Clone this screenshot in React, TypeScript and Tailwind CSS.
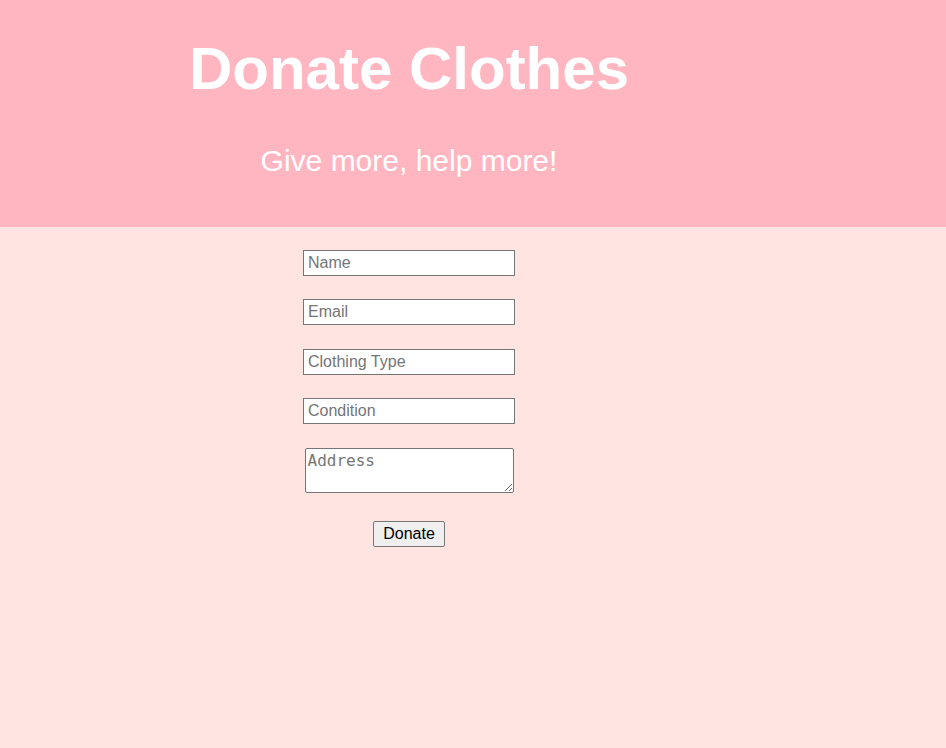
import React from 'react';

const fieldClass =
  'block w-[212px] h-[26px] border border-[#767676] bg-white px-[4px] text-[16px] text-black placeholder:text-[#757575] outline-none';

const App: React.FC = () => {
  return (
    <div className="min-h-screen bg-[#ffe4e1] font-['Liberation_Sans',Arial,sans-serif]">
      {/* Header */}
      <header className="bg-[#ffb6c1] h-[227px]">
        <div className="w-[818px] pt-[34px] text-center text-white">
          <h1 className="text-[60px] leading-[69px] font-bold">Donate Clothes</h1>
          <p className="mt-[40px] text-[30px] leading-[35px]">Give more, help more!</p>
        </div>
      </header>

      {/* Form */}
      <form className="w-[818px] pt-[23px] flex flex-col items-center" onSubmit={(e) => e.preventDefault()}>
        <input type="text" placeholder="Name" className={fieldClass} />
        <input type="email" placeholder="Email" className={`${fieldClass} mt-[23px]`} />
        <input type="text" placeholder="Clothing Type" className={`${fieldClass} mt-[23.5px]`} />
        <input type="text" placeholder="Condition" className={`${fieldClass} mt-[23.5px]`} />
        <textarea
          placeholder="Address"
          className="block w-[209px] h-[45px] mt-[23.5px] border border-[#767676] rounded-[2px] bg-white px-[2px] py-[2px] text-[16px] leading-[19px] font-['DejaVu_Sans_Mono',monospace] placeholder:text-[#757575] outline-none"
        />
        <button
          type="submit"
          className="mt-[28px] w-[72px] h-[26px] border border-[#767676] rounded-[2px] bg-[#efefef] text-[16px] text-black"
        >
          Donate
        </button>
      </form>
    </div>
  );
};

export default App;
